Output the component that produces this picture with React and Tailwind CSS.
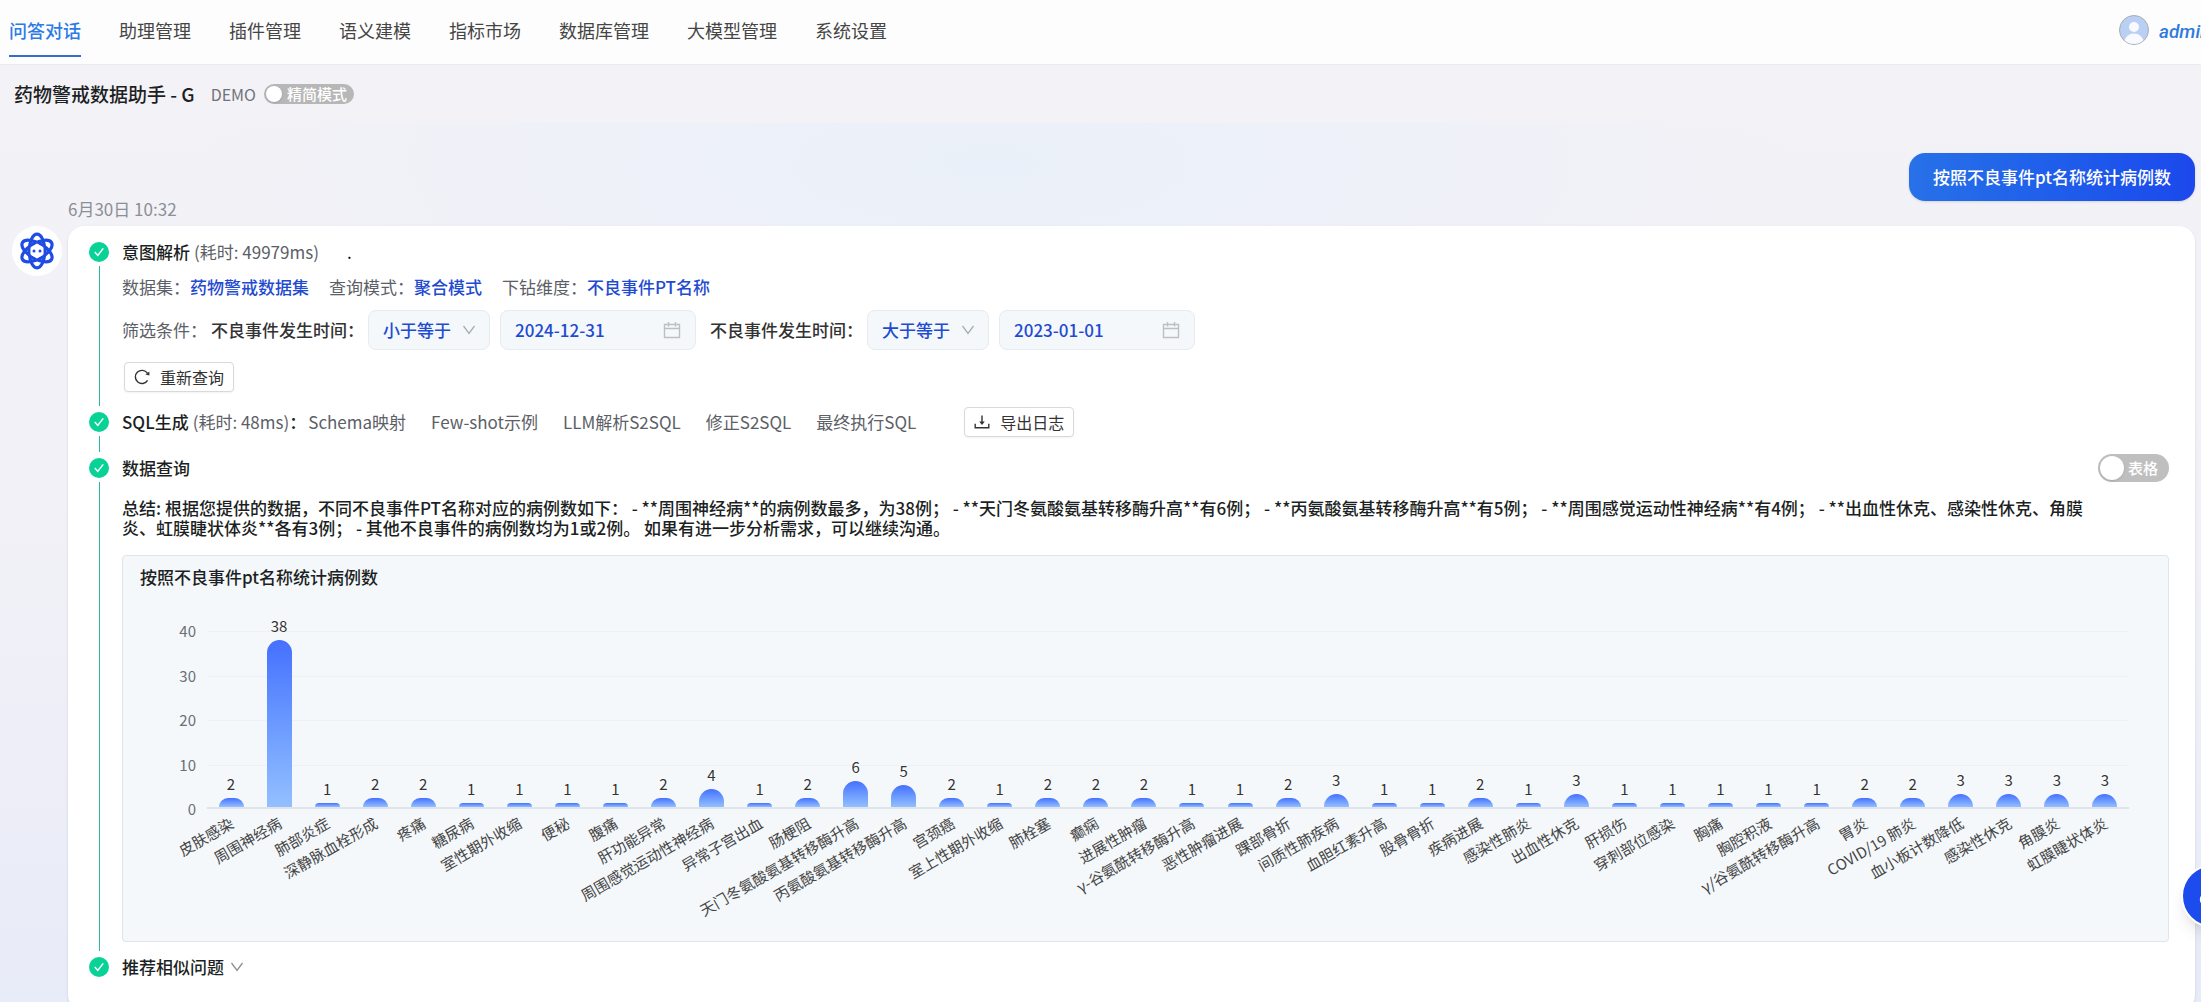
import React from "react";

const NAV = ["问答对话", "助理管理", "插件管理", "语义建模", "指标市场", "数据库管理", "大模型管理", "系统设置"];

const DATA = [
  ["皮肤感染", 2], ["周围神经病", 38], ["肺部炎症", 1], ["深静脉血栓形成", 2], ["疼痛", 2], ["糖尿病", 1],
  ["室性期外收缩", 1], ["便秘", 1], ["腹痛", 1], ["肝功能异常", 2], ["周围感觉运动性神经病", 4], ["异常子宫出血", 1],
  ["肠梗阻", 2], ["天门冬氨酸氨基转移酶升高", 6], ["丙氨酸氨基转移酶升高", 5], ["宫颈癌", 2], ["室上性期外收缩", 1],
  ["肺栓塞", 2], ["癫痫", 2], ["进展性肿瘤", 2], ["γ-谷氨酰转移酶升高", 1], ["恶性肿瘤进展", 1], ["踝部骨折", 2],
  ["间质性肺疾病", 3], ["血胆红素升高", 1], ["股骨骨折", 1], ["疾病进展", 2], ["感染性肺炎", 1], ["出血性休克", 3],
  ["肝损伤", 1], ["穿刺部位感染", 1], ["胸痛", 1], ["胸腔积液", 1], ["γ/谷氨酰转移酶升高", 1], ["胃炎", 2],
  ["COVID/19 肺炎", 2], ["血小板计数降低", 3], ["感染性休克", 3], ["角膜炎", 3], ["虹膜睫状体炎", 3],
];

const STAGES = ["Schema映射", "Few-shot示例", "LLM解析S2SQL", "修正S2SQL", "最终执行SQL"];

const SUMMARY =
  "总结: 根据您提供的数据，不同不良事件PT名称对应的病例数如下： - **周围神经病**的病例数最多，为38例； - **天门冬氨酸氨基转移酶升高**有6例； - **丙氨酸氨基转移酶升高**有5例； - **周围感觉运动性神经病**有4例； - **出血性休克、感染性休克、角膜炎、虹膜睫状体炎**各有3例； - 其他不良事件的病例数均为1或2例。 如果有进一步分析需求，可以继续沟通。";

function Header() {
  return (
    <header className="flex h-[65px] shrink-0 items-center justify-between border-b border-[#ebebed] bg-[#fdfdfd]">
      <nav className="flex h-full items-start gap-[38px] pl-[9px] pt-[5px]">
        {NAV.map((item, i) => (
          <a
            key={item}
            href="#"
            className={
              i === 0
                ? "flex h-[52px] items-center border-b-2 border-[#3370c4] text-lg font-medium text-[#2c7be5]"
                : "flex h-[52px] items-center border-b-2 border-transparent text-lg text-[#454545]"
            }
          >
            {item}
          </a>
        ))}
      </nav>
      <div className="mb-1 flex w-[82px] shrink-0 items-center gap-2.5 overflow-hidden">
        <svg viewBox="0 0 30 30" className="size-[30px] shrink-0">
          <defs>
            <clipPath id="avatar">
              <circle cx="15" cy="15" r="14" />
            </clipPath>
          </defs>
          <circle cx="15" cy="15" r="14.5" fill="#b9cff3" stroke="#a9adb5" />
          <g clipPath="url(#avatar)" fill="#f8faff">
            <circle cx="15" cy="12" r="5" />
            <ellipse cx="15" cy="27" rx="9.5" ry="8.5" />
          </g>
        </svg>
        <span className="pt-1 text-[19px] font-medium italic text-[#2f7bdc] [font-family:Roboto,sans-serif]">admin</span>
      </div>
    </header>
  );
}

function Toggle({ label, small }) {
  return (
    <label
      className={
        small
          ? "relative flex h-5 items-center rounded-full bg-[#b7b7b8] pl-[23px] pr-[7px] text-[15px] font-medium text-white"
          : "relative flex h-7 items-center rounded-full bg-[#bfbfbf] pl-[30px] pr-[11px] text-[15px] font-medium text-white"
      }
    >
      <input type="checkbox" role="switch" className="sr-only" />
      <span
        className={
          small
            ? "absolute left-0.5 top-0.5 size-4 rounded-full bg-white shadow"
            : "absolute left-0.5 top-0.5 size-6 rounded-full bg-white shadow"
        }
      />
      {label}
    </label>
  );
}

function Logo() {
  return (
    <div className="flex size-[50px] shrink-0 items-center justify-center rounded-full bg-white">
      <svg viewBox="0 0 38 38" className="size-[38px]" fill="none" stroke="#1f4de4" strokeWidth="3.2">
        {[0, 60, 120].map((a) => (
          <ellipse key={a} cx="19" cy="19" rx="7.8" ry="16.8" transform={`rotate(${a} 19 19)`} />
        ))}
        <path d="M19 12l6 3.5v7L19 26l-6-3.5v-7z" fill="#fff" stroke="#fff" strokeWidth="1" />
        <circle cx="16" cy="19" r="1.5" fill="#1f4de4" stroke="none" />
        <circle cx="22" cy="19" r="1.5" fill="#1f4de4" stroke="none" />
      </svg>
    </div>
  );
}

function Step({ children, last }) {
  return (
    <section className="flex gap-[13px]">
      <div className="flex w-5 shrink-0 flex-col items-center">
        <span className="mt-0.5 flex size-5 shrink-0 items-center justify-center rounded-full bg-[#09d297]">
          <svg viewBox="0 0 12 12" className="size-3" fill="none" stroke="#fff" strokeWidth="1.5">
            <path d="M1.8 6l3 3.4L10.2 2.4" />
          </svg>
        </span>
        {!last && <span className="my-1 w-px flex-1 bg-[#2fb89c]" />}
      </div>
      <div className="min-w-0 flex-1">{children}</div>
    </section>
  );
}

function Caret({ className }) {
  return (
    <svg viewBox="0 0 14 12" className={className} fill="none" stroke="currentColor" strokeWidth="1.3">
      <path d="M1.5 2L7 9.5 12.5 2" />
    </svg>
  );
}

function Calendar() {
  return (
    <svg viewBox="0 0 18 18" className="size-[18px] shrink-0" fill="none" stroke="#bcc0c4" strokeWidth="1.4">
      <path d="M1.5 3.5h15v13h-15zM1.5 7.5h15M5.5 1v4.5M12.5 1v4.5" />
    </svg>
  );
}

function ReloadIcon() {
  return (
    <svg viewBox="0 0 16 16" className="size-4" fill="none" stroke="currentColor" strokeWidth="1.4">
      <path d="M13.6 11.4A6.6 6.6 0 1 1 13.4 4.2" />
      <path d="M15.4 2.4v4.2l-4-1.2z" fill="currentColor" stroke="none" />
    </svg>
  );
}

function ExportIcon() {
  return (
    <svg viewBox="0 0 16 16" className="size-4" fill="none" stroke="currentColor" strokeWidth="1.4">
      <path d="M1.2 9.8v4h13.6v-4M8 1.5v7" />
      <path d="M5.2 7.4h5.6L8 11z" fill="currentColor" stroke="none" />
    </svg>
  );
}

function SmallButton({ icon, children, className }) {
  return (
    <button
      type="button"
      className={`flex h-[30px] shrink-0 items-center gap-2.5 rounded border border-[#d9d9d9] bg-white px-[9px] text-base text-[#333] shadow-xs ${className}`}
    >
      {icon}
      {children}
    </button>
  );
}

function Filter({ op, date, id }) {
  return (
    <div className="flex items-center">
      <span className="mr-1 font-medium text-[#333]">不良事件发生时间：</span>
      <div className="relative mr-2.5 flex items-center">
        <select
          aria-label={`不良事件发生时间条件${id}`}
          defaultValue={op}
          className="h-10 w-[122px] appearance-none rounded-lg border border-[#e6ebef] bg-[#f4f8fb] pl-3.5 font-medium text-[#1f4bd0]"
        >
          <option>小于等于</option>
          <option>大于等于</option>
        </select>
        <Caret className="pointer-events-none absolute right-3.5 h-3 w-3.5 text-[#a9adb2]" />
      </div>
      <div className="flex h-10 w-[196px] items-center rounded-lg border border-[#e6ebef] bg-[#f4f8fb] pl-3.5 pr-3.5">
        <input
          aria-label={`不良事件发生时间日期${id}`}
          defaultValue={date}
          className="min-w-0 flex-1 bg-transparent font-medium text-[#1f4bd0]"
        />
        <Calendar />
      </div>
    </div>
  );
}

function Fact({ label, value }) {
  return (
    <span>
      {label}：<b className="font-medium text-[#1f4bd0]">{value}</b>
    </span>
  );
}

function Chart() {
  return (
    <div className="h-[387px] rounded border border-[#dfe5ea] bg-[#f4f8fb] px-[17px] pt-[9px]">
      <h3 className="font-medium text-[#1c1f23]">按照不良事件pt名称统计病例数</h3>
      <div className="mt-[42px] flex pr-[22px]">
        <div className="-my-2.5 flex h-[198px] w-14 shrink-0 flex-col justify-between text-right text-[15px] leading-5 text-[#6b6f76]">
          {[40, 30, 20, 10, 0].map((n) => (
            <span key={n}>{n}</span>
          ))}
        </div>
        <div className="relative ml-[11px] h-[178px] flex-1">
          <div className="absolute inset-0 flex flex-col">
            {[40, 30, 20, 10].map((n) => (
              <div key={n} className="flex-1 border-t border-[#edf1f5]" />
            ))}
          </div>
          <div className="relative flex h-full items-end">
            {DATA.map(([name, value], i) => (
              <div key={i} className="flex h-full flex-1 flex-col items-center justify-end border-b-2 border-[#dfe3ea]">
                <span className="mb-1 text-[15px] leading-5 text-[#333] [text-shadow:0_0_2px_#fff,0_0_2px_#fff]">{value}</span>
                <div
                  className="w-[25px] shrink-0 rounded-t-[13px] bg-gradient-to-b from-[#466fff] to-[#94bfff]"
                  style={{ height: `${(value / 40) * 100}%` }}
                />
                <div className="relative w-full">
                  <span className="absolute right-1/2 top-1.5 mr-1 origin-top-right -rotate-30 whitespace-nowrap text-[15px] leading-5 text-[#454545]">
                    {name}
                  </span>
                </div>
              </div>
            ))}
          </div>
        </div>
      </div>
    </div>
  );
}

export default function App() {
  return (
    <div className="relative flex h-screen flex-col overflow-hidden bg-[linear-gradient(180deg,#f3f2f7_0%,#f2f1f7_50%,#e8ebf8_100%)] text-[17px] leading-6 text-[#5c6066] [font-family:'Noto_Sans_CJK_SC','Noto_Sans',sans-serif]">
      <Header />
      <div className="flex h-[58px] shrink-0 items-center pl-3.5">
        <h1 className="text-[19px] font-medium text-[#1c1f23]">药物警戒数据助手 - G</h1>
        <span className="ml-4 mr-2 text-base text-[#6f7378]">DEMO</span>
        <Toggle label="精简模式" small />
      </div>
      <main className="flex-1 bg-[radial-gradient(ellipse_36%_260px_at_45%_40px,#eaf0f9_0%,transparent_100%)] pl-3 pr-1.5">
        <div className="flex justify-end pt-[30px]">
          <div className="flex h-12 items-center rounded-2xl bg-gradient-to-r from-[#2871e8] to-[#1c48ec] px-6 font-medium text-white shadow">
            按照不良事件pt名称统计病例数
          </div>
        </div>
        <time className="ml-14 block h-[25px] leading-4 text-[#8b8f96]">6月30日 10:32</time>
        <div className="flex gap-1.5">
          <Logo />
          <article className="min-w-0 flex-1 rounded-2xl bg-white pb-8 pl-[21px] pr-[26px] pt-3.5 shadow">
            <Step>
              <div className="flex">
                <b className="mr-1 font-medium text-[#1c1f23]">意图解析</b>
                <span>(耗时: 49979ms)</span>
                <span className="ml-7 text-black">.</span>
              </div>
              <div className="mt-[11px] flex flex-wrap gap-5">
                <Fact label="数据集" value="药物警戒数据集" />
                <Fact label="查询模式" value="聚合模式" />
                <Fact label="下钻维度" value="不良事件PT名称" />
              </div>
              <div className="mt-[11px] flex flex-wrap items-center">
                <span className="mr-1">筛选条件：</span>
                <div className="flex flex-wrap gap-3.5">
                  <Filter id={1} op="小于等于" date="2024-12-31" />
                  <Filter id={2} op="大于等于" date="2023-01-01" />
                </div>
              </div>
              <SmallButton icon={<ReloadIcon />} className="mb-[18px] ml-0.5 mt-3">
                重新查询
              </SmallButton>
            </Step>
            <Step>
              <div className="mb-[22px] flex h-6 items-center">
                <b className="mr-1 font-medium text-[#1c1f23]">SQL生成</b>
                <span>(耗时: 48ms)</span>
                <b className="mr-0.5 font-medium text-[#1c1f23]">：</b>
                <div className="flex gap-[25px]">
                  {STAGES.map((s) => (
                    <span key={s}>{s}</span>
                  ))}
                </div>
                <SmallButton icon={<ExportIcon />} className="ml-12">
                  导出日志
                </SmallButton>
              </div>
            </Step>
            <Step>
              <div className="flex h-6 items-center justify-between">
                <b className="font-medium text-[#1c1f23]">数据查询</b>
                <Toggle label="表格" />
              </div>
              <p className="mt-[18px] pr-14 font-medium leading-5 text-[#1c1f23]">{SUMMARY}</p>
              <div className="mb-[13px] mt-[17px]">
                <Chart />
              </div>
            </Step>
            <Step last>
              <button type="button" className="flex items-center gap-1.5 font-medium text-[#1c1f23]">
                推荐相似问题
                <Caret className="h-3 w-3.5 text-[#8a8f94]" />
              </button>
            </Step>
          </article>
        </div>
      </main>
      <button
        type="button"
        aria-label="打开助手"
        className="absolute -right-11 bottom-[74px] flex size-16 items-center justify-center rounded-full border-2 border-white bg-[#1c4bee] text-white shadow-lg"
      >
        <svg viewBox="0 0 28 28" className="size-7" fill="none" stroke="currentColor" strokeWidth="2.4">
          <path d="M7 11a7 7 0 0 1 14 0v10M7 11v10" />
          <path d="M7 12.5a5 5 0 0 0 0 10M21 12.5a5 5 0 0 1 0 10" />
        </svg>
      </button>
    </div>
  );
}
